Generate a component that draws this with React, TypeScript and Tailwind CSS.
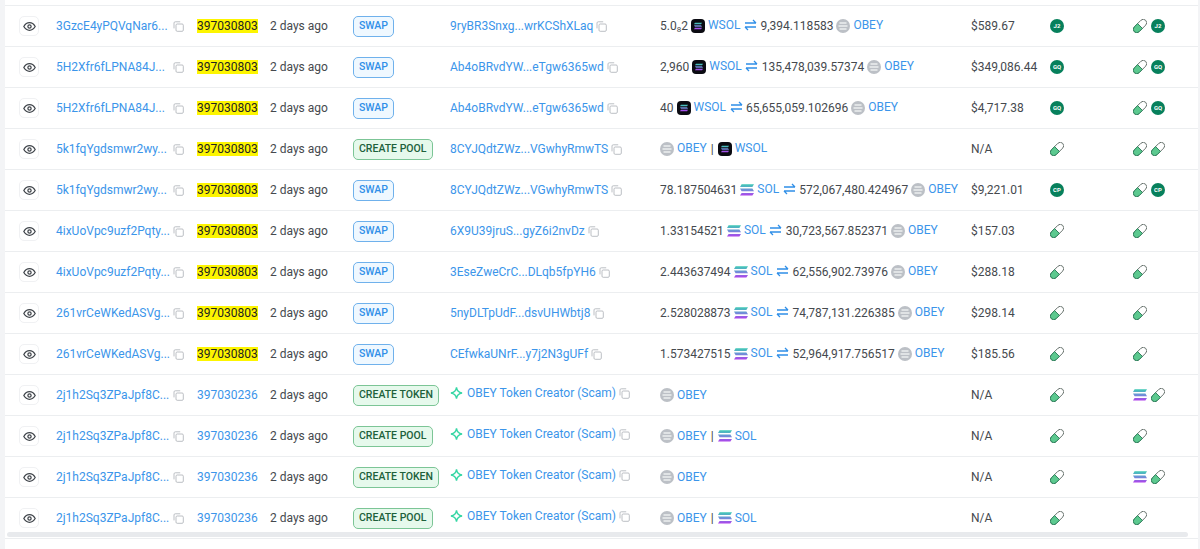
import React from "react";

const SolBars = ({ size = 14 }: { size?: number }) => (
  <svg width={size} height={size} viewBox="0 0 14 14" className="shrink-0">
    <defs>
      <linearGradient id="solg" x1="0" y1="0" x2="0" y2="1">
        <stop offset="0" stopColor="#3fc9b5" />
        <stop offset="0.5" stopColor="#6f8fd8" />
        <stop offset="1" stopColor="#b040ec" />
      </linearGradient>
    </defs>
    <path d="M1.600 1.300H14L12.400 4H0Z M0 5.600H12.400L14 8.300H1.600Z M1.600 9.900H14L12.400 12.600H0Z" fill="url(#solg)" />
  </svg>
);

const Wsol = () => (
  <span className="flex h-[14px] w-[14px] shrink-0 items-center justify-center rounded-[4px] bg-[#0b0b12]">
    <SolBars size={8} />
  </span>
);

const Obey = () => (
  <span className="flex h-[14px] w-[14px] shrink-0 items-center justify-center rounded-full bg-[#bcc0c6]">
    <svg width="10" height="8" viewBox="0 0 10 8">
      <path d="M1.500 1h7M0.500 4h9M1.500 7h7" stroke="#eceef0" strokeWidth="1.300" />
    </svg>
  </span>
);

const Pill = () => (
  <svg width="14" height="14" viewBox="0 0 14 14" className="shrink-0">
    <g transform="rotate(-45 7 7)">
      <rect x="-1" y="3.600" width="16" height="6.800" rx="3.400" fill="#fff" stroke="#5f6b66" strokeWidth="0.9" />
      <path d="M7 3.600H2.400a3.400 3.400 0 0 0 0 6.800H7Z" fill="#5cc98f" stroke="#2e7d5b" strokeWidth="0.9" />
    </g>
  </svg>
);

const Badge = ({ t }: { t: string }) => (
  <span className="flex h-[14px] w-[14px] shrink-0 items-center justify-center rounded-full bg-[#07805c] text-[6px] font-bold leading-none text-white">
    {t}
  </span>
);

const Copy = () => (
  <svg width="11" height="11" viewBox="0 0 11 11" fill="none" className="mt-px shrink-0" stroke="#b4b8bd" strokeWidth="0.9">
    <rect x="3" y="3" width="7.300" height="7.300" rx="1.200" />
    <path d="M1 7.400V2a1.200 1.200 0 0 1 1.200-1.200H7.200" />
  </svg>
);

const Eye = () => (
  <span className="flex h-[20px] w-[20px] items-center justify-center rounded-[5px] border border-[#f0f1f3] bg-white">
    <svg width="13" height="13" viewBox="0 0 24 24" fill="none" stroke="#3f444a" strokeWidth="2.300">
      <path d="M1.500 12S5.500 5 12 5s10.500 7 10.500 7-4 7-10.500 7S1.500 12 1.500 12Z" />
      <circle cx="12" cy="12" r="3" />
    </svg>
  </span>
);

const Swap = () => (
  <svg width="13" height="12" viewBox="0 0 13 12" fill="none" stroke="#2f8fe8" strokeWidth="1.300" className="mx-[3.500px] -translate-y-px shrink-0">
    <path d="M1 4h11M9 1 12 4M12 8H1M4 11 1 8" />
  </svg>
);

const L = ({ children }: { children: React.ReactNode }) => <span className="text-[#3b95ea]">{children}</span>;

const SwapToken = ({ a, ai, an, b }: { a: React.ReactNode; ai: "w" | "s"; an: string; b: string }) => (
  <>
    <span>{a}</span>
    <span className="ml-[3px]">{ai === "w" ? <Wsol /> : <SolBars />}</span>
    <span className="ml-[3px] -translate-y-px"><L>{an}</L></span>
    <Swap />
    <span>{b}</span>
    <span className="ml-[3px]"><Obey /></span>
    <span className="ml-[3px] -translate-y-px"><L>OBEY</L></span>
  </>
);

const Pair = ({ i, flat }: { i: "w" | "s"; flat?: boolean }) => (
  <>
    <Obey />
    <span className={flat ? "ml-[3px]" : "ml-[3px] -translate-y-px"}><L>OBEY</L></span>
    <span className="mx-[4px] text-[#444]">|</span>
    {i === "w" ? <Wsol /> : <SolBars />}
    <span className={flat ? "ml-[3px]" : "ml-[3px] -translate-y-px"}><L>{i === "w" ? "WSOL" : "SOL"}</L></span>
  </>
);

const Single = () => (
  <>
    <Obey />
    <span className="ml-[3px]"><L>OBEY</L></span>
  </>
);

type Row = {
  sig: string;
  hit: boolean;
  action: "SWAP" | "CREATE POOL" | "CREATE TOKEN";
  by: string;
  star?: boolean;
  token: React.ReactNode;
  value: string;
  plat: React.ReactNode;
  src: React.ReactNode;
};

const scam = "OBEY Token Creator (Scam)";

const rows: Row[] = [
  { sig: "3GzcE4yPQVqNar6...", hit: true, action: "SWAP", by: "9ryBR3Snxg...wrKCShXLaq", token: <SwapToken a={<>5.0<sub className="text-[8px]">8</sub>2</>} ai="w" an="WSOL" b="9,394.118583" />, value: "$589.67", plat: <Badge t="J2" />, src: <><Pill /><Badge t="J2" /></> },
  { sig: "5H2Xfr6fLPNA84J...", hit: true, action: "SWAP", by: "Ab4oBRvdYW...eTgw6365wd", token: <SwapToken a="2,960" ai="w" an="WSOL" b="135,478,039.57374" />, value: "$349,086.44", plat: <Badge t="GQ" />, src: <><Pill /><Badge t="GQ" /></> },
  { sig: "5H2Xfr6fLPNA84J...", hit: true, action: "SWAP", by: "Ab4oBRvdYW...eTgw6365wd", token: <SwapToken a="40" ai="w" an="WSOL" b="65,655,059.102696" />, value: "$4,717.38", plat: <Badge t="GQ" />, src: <><Pill /><Badge t="GQ" /></> },
  { sig: "5k1fqYgdsmwr2wy...", hit: true, action: "CREATE POOL", by: "8CYJQdtZWz...VGwhyRmwTS", token: <Pair i="w" />, value: "N/A", plat: <Pill />, src: <><Pill /><Pill /></> },
  { sig: "5k1fqYgdsmwr2wy...", hit: true, action: "SWAP", by: "8CYJQdtZWz...VGwhyRmwTS", token: <SwapToken a="78.187504631" ai="s" an="SOL" b="572,067,480.424967" />, value: "$9,221.01", plat: <Badge t="CP" />, src: <><Pill /><Badge t="CP" /></> },
  { sig: "4ixUoVpc9uzf2Pqty...", hit: true, action: "SWAP", by: "6X9U39jruS...gyZ6i2nvDz", token: <SwapToken a="1.33154521" ai="s" an="SOL" b="30,723,567.852371" />, value: "$157.03", plat: <Pill />, src: <Pill /> },
  { sig: "4ixUoVpc9uzf2Pqty...", hit: true, action: "SWAP", by: "3EseZweCrC...DLqb5fpYH6", token: <SwapToken a="2.443637494" ai="s" an="SOL" b="62,556,902.73976" />, value: "$288.18", plat: <Pill />, src: <Pill /> },
  { sig: "261vrCeWKedASVg...", hit: true, action: "SWAP", by: "5nyDLTpUdF...dsvUHWbtj8", token: <SwapToken a="2.528028873" ai="s" an="SOL" b="74,787,131.226385" />, value: "$298.14", plat: <Pill />, src: <Pill /> },
  { sig: "261vrCeWKedASVg...", hit: true, action: "SWAP", by: "CEfwkaUNrF...y7j2N3gUFf", token: <SwapToken a="1.573427515" ai="s" an="SOL" b="52,964,917.756517" />, value: "$185.56", plat: <Pill />, src: <Pill /> },
  { sig: "2j1h2Sq3ZPaJpf8C...", hit: false, action: "CREATE TOKEN", by: scam, star: true, token: <Single />, value: "N/A", plat: <Pill />, src: <><SolBars /><Pill /></> },
  { sig: "2j1h2Sq3ZPaJpf8C...", hit: false, action: "CREATE POOL", by: scam, star: true, token: <Pair i="s" flat />, value: "N/A", plat: <Pill />, src: <Pill /> },
  { sig: "2j1h2Sq3ZPaJpf8C...", hit: false, action: "CREATE TOKEN", by: scam, star: true, token: <Single />, value: "N/A", plat: <Pill />, src: <><SolBars /><Pill /></> },
  { sig: "2j1h2Sq3ZPaJpf8C...", hit: false, action: "CREATE POOL", by: scam, star: true, token: <Pair i="s" flat />, value: "N/A", plat: <Pill />, src: <Pill /> },
];

const Tag = ({ a }: { a: Row["action"] }) =>
  a === "SWAP" ? (
    <span className="flex h-[21px] w-[41px] items-center justify-center rounded-[5px] border border-[#6fb1ec] bg-[#eff8ff] text-[10.500px] font-medium leading-none text-[#2f8fe8]">
      SWAP
    </span>
  ) : (
    <span className="flex h-[21px] items-center rounded-[5px] border border-[#7cc596] bg-[#e6f9ec] px-[5px] text-[10.500px] font-medium leading-none text-[#20613b]">
      {a}
    </span>
  );

export default function App() {
  return (
    <div className="h-[549px] w-[1200px] overflow-hidden bg-[#f3f4f6] pl-[5px] pr-[2px] font-['Roboto',sans-serif] text-[12px] text-[#45494e]">
      <div className="h-[549px] bg-white">
        <div className="h-[5px]" />
        {rows.map((r, i) => (
          <div key={i} className="flex h-[41px] items-center border-t border-[#eceef0] pl-[14px]">
            <div className="w-[37px]"><Eye /></div>
            <div className="flex w-[141px] items-center text-[#3b95ea]">
              <span className="w-[117px] whitespace-nowrap">{r.sig}</span>
              <Copy />
            </div>
            <div className="w-[73px]">
              {r.hit ? <span className="bg-[#fdf500] text-[#222]">397030803</span> : <span className="text-[#3b95ea]">397030236</span>}
            </div>
            <div className="w-[83px] whitespace-nowrap">2 days ago</div>
            <div className="flex w-[97px]"><Tag a={r.action} /></div>
            <div className={r.star ? "flex w-[210px] -translate-y-[2px] items-center whitespace-nowrap" : "flex w-[210px] items-center whitespace-nowrap"}>
              {r.star && (
                <svg width="13" height="14" viewBox="0 0 14 14" className="mr-[4px] shrink-0" fill="none" stroke="#35d6a4" strokeWidth="1.500">
                  <path d="M7 1C7.500 4.800 9.200 6.500 13 7 9.200 7.500 7.500 9.200 7 13 6.500 9.200 4.800 7.500 1 7 4.800 6.500 6.500 4.800 7 1Z" />
                </svg>
              )}
              <span className="text-[#3b95ea]">{r.by}</span>
              <span className="ml-[3px]"><Copy /></span>
            </div>
            <div className="flex w-[311px] items-center whitespace-nowrap">{r.token}</div>
            <div className="w-[79px]">{r.value}</div>
            <div className="flex w-[83px]">{r.plat}</div>
            <div className="flex items-center gap-[4px]">{r.src}</div>
          </div>
        ))}
        <div className="ml-[2px] mt-[-6px] h-[5px] w-[1181px] rounded-full bg-[#e8eaed]" />
        <div className="mt-[1px] border-t border-[#eceef0]" />
      </div>
    </div>
  );
}
